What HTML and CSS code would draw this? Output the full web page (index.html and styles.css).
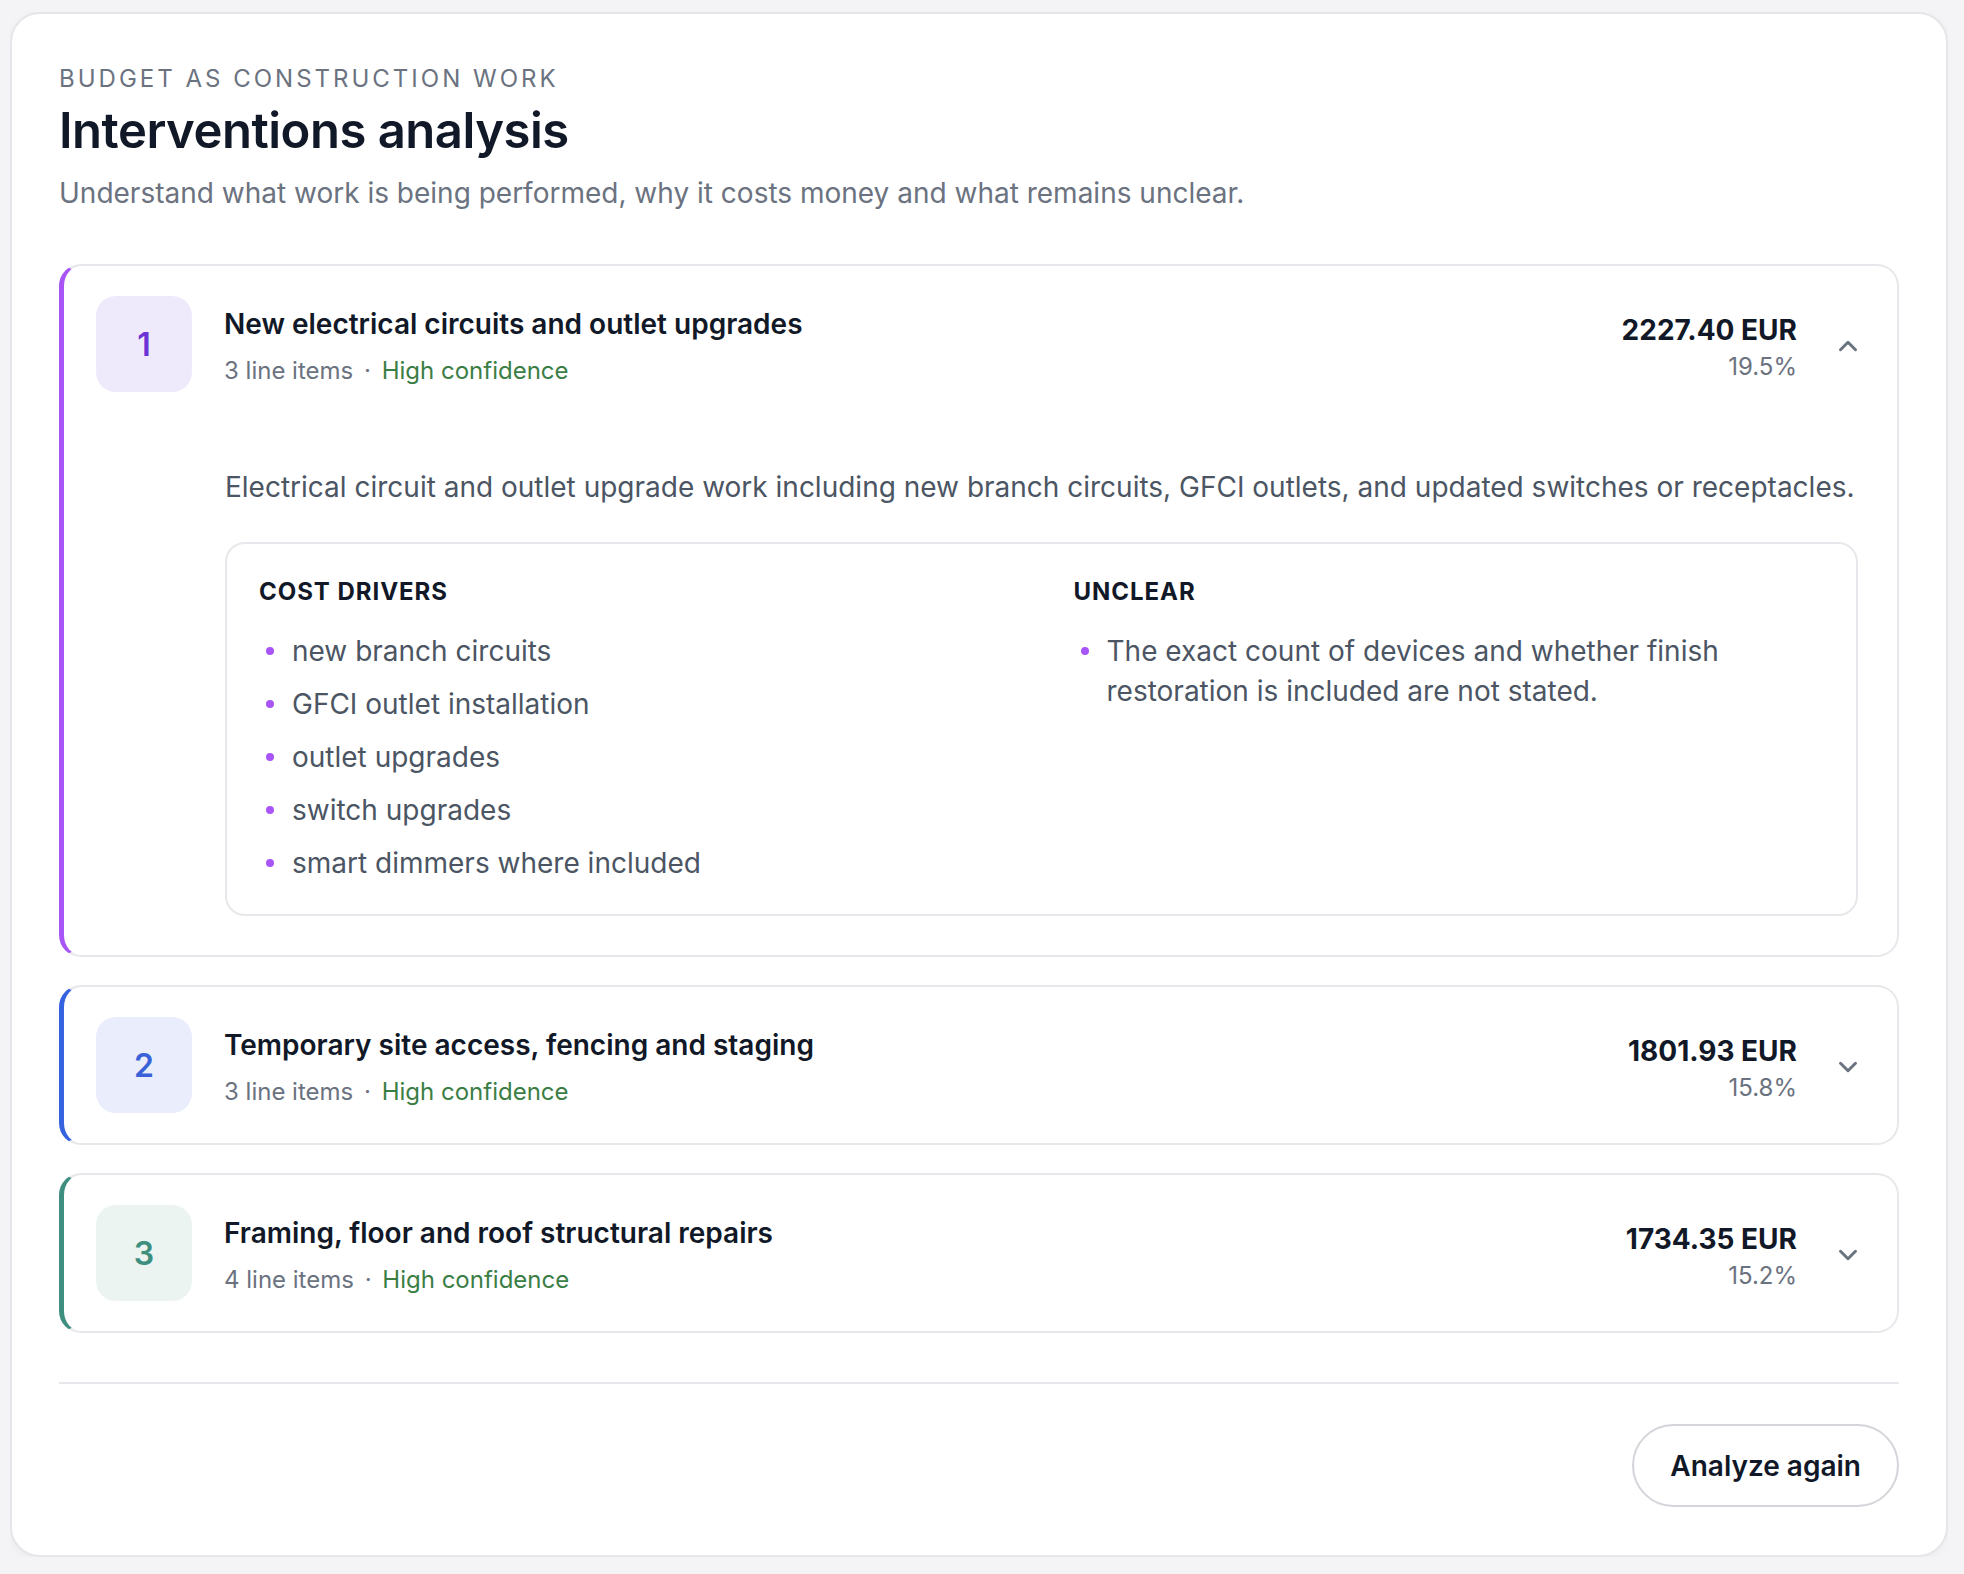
FILE: index.html
```html
<!DOCTYPE html>
<html lang="en">
  <head>
    <title>Interventions analysis</title>
    <link rel="stylesheet" href="styles.css">
  </head>

  <body>
    <section class="panel">
      <header class="panel-head">
        <p class="eyebrow">Budget as construction work</p>
        <h1>Interventions analysis</h1>
        <p class="lead">Understand what work is being performed, why it costs money and what remains unclear.</p>
      </header>

      <div class="items">
        <article class="item item-purple open">
          <div class="item-head">
            <div class="badge">1</div>
            <div class="item-info">
              <h3>New electrical circuits and outlet upgrades</h3>
              <p class="meta">3 line items <span class="dot">·</span> <span class="conf">High confidence</span></p>
            </div>
            <div class="amount">
              <strong>2227.40 EUR</strong>
              <span>19.5%</span>
            </div>
            <svg class="chev" viewBox="0 0 24 24" width="30" height="30"><path d="M6 15l6-6 6 6" /></svg>
          </div>

          <div class="item-body">
            <p class="desc">Electrical circuit and outlet upgrade work including new branch circuits, GFCI outlets, and updated switches or receptacles.</p>
            <div class="details">
              <div>
                <h4>Cost drivers</h4>
                <ul>
                  <li>new branch circuits</li>
                  <li>GFCI outlet installation</li>
                  <li>outlet upgrades</li>
                  <li>switch upgrades</li>
                  <li>smart dimmers where included</li>
                </ul>
              </div>
              <div>
                <h4>Unclear</h4>
                <ul>
                  <li>The exact count of devices and whether finish restoration is included are not stated.</li>
                </ul>
              </div>
            </div>
          </div>
        </article>

        <article class="item item-blue">
          <div class="item-head">
            <div class="badge">2</div>
            <div class="item-info">
              <h3>Temporary site access, fencing and staging</h3>
              <p class="meta">3 line items <span class="dot">·</span> <span class="conf">High confidence</span></p>
            </div>
            <div class="amount">
              <strong>1801.93 EUR</strong>
              <span>15.8%</span>
            </div>
            <svg class="chev" viewBox="0 0 24 24" width="30" height="30"><path d="M6 9l6 6 6-6" /></svg>
          </div>
        </article>

        <article class="item item-teal">
          <div class="item-head">
            <div class="badge">3</div>
            <div class="item-info">
              <h3>Framing, floor and roof structural repairs</h3>
              <p class="meta">4 line items <span class="dot">·</span> <span class="conf">High confidence</span></p>
            </div>
            <div class="amount">
              <strong>1734.35 EUR</strong>
              <span>15.2%</span>
            </div>
            <svg class="chev" viewBox="0 0 24 24" width="30" height="30"><path d="M6 9l6 6 6-6" /></svg>
          </div>
        </article>
      </div>

      <footer class="panel-foot">
        <button type="button">Analyze again</button>
      </footer>
    </section>
  </body>
</html>
```

FILE: styles.css
```css
body {
  margin: 12px 16px 17px 10px;
  background: #f4f4f6;
  color: #111827;
  font-family: Inter, "Noto Sans", sans-serif;
}
.panel {
  background: #fff;
  border: 2px solid #e6e6ea;
  border-radius: 30px;
  box-shadow: 0 2px 10px rgba(0, 0, 0, 0.04);
  padding: 48px 47px 48px 47px;
  box-sizing: border-box;
  height: 1545px;
  display: flex;
  flex-direction: column;
}
.eyebrow {
  margin: 0;
  font-size: 24px;
  line-height: 34px;
  letter-spacing: 3px;
  text-transform: uppercase;
  color: #6b7280;
}
h1 {
  margin: 6px 0 0;
  font-size: 49px;
  line-height: 58px;
  font-weight: 600;
  letter-spacing: -0.01em;
}
.lead {
  margin: 14px 0 0;
  font-size: 28px;
  line-height: 38px;
  color: #6b7280;
}
.items {
  margin-top: 52px;
  display: flex;
  flex-direction: column;
  gap: 28px;
}
.item {
  border: 2px solid #e8e8ec;
  border-left: 5px solid #a855f7;
  border-radius: 22px;
}
.item-blue {
  border-left-color: #3563e0;
}
.item-teal {
  border-left-color: #3f8f81;
}
.item-head {
  display: flex;
  align-items: center;
  gap: 32px;
  padding: 30px 34px 30px 32px;
}
.badge {
  width: 96px;
  height: 96px;
  flex: none;
  border-radius: 20px;
  background: #efeafb;
  color: #6d32d4;
  display: flex;
  align-items: center;
  justify-content: center;
  font-size: 32px;
  font-weight: 600;
}
.item-blue .badge {
  background: #eaeefc;
  color: #3a62d8;
}
.item-teal .badge {
  background: #ecf4f2;
  color: #3d8f7e;
}
.item-info {
  flex: 1;
  padding-top: 6px;
}
.item-info h3 {
  margin: 0;
  font-size: 28px;
  line-height: 34px;
  font-weight: 600;
}
.meta {
  margin: 14px 0 0;
  font-size: 24px;
  line-height: 32px;
  color: #6b7280;
}
.meta .dot {
  margin: 0 4px;
}
.conf {
  color: #3b7e45;
}
.amount {
  display: flex;
  flex-direction: column;
  align-items: flex-end;
  padding-top: 6px;
}
.amount strong {
  font-size: 28px;
  line-height: 34px;
  font-weight: 700;
}
.amount span {
  margin-top: 5px;
  font-size: 24px;
  line-height: 30px;
  color: #6b7280;
}
.chev {
  flex: none;
  margin: 4px 0 0 4px;
  fill: none;
  stroke: #6b7280;
  stroke-width: 2.4;
  stroke-linecap: round;
  stroke-linejoin: round;
}
.item-body {
  padding: 45px 39px 39px 161px;
}
.desc {
  margin: 0 -20px 0 0;
  font-size: 28px;
  line-height: 40px;
  color: #4b5563;
}
.details {
  margin-top: 35px;
  border: 2px solid #e8e8ec;
  border-radius: 20px;
  padding: 32px 32px 31px;
  display: grid;
  grid-template-columns: 1fr 1fr;
  column-gap: 64px;
}
.details h4 {
  margin: 0;
  font-size: 24px;
  line-height: 32px;
  font-weight: 700;
  letter-spacing: 0.04em;
  text-transform: uppercase;
}
.details ul {
  list-style: none;
  margin: 23px 0 0;
  padding: 0;
  display: flex;
  flex-direction: column;
  gap: 13px;
}
.details li {
  position: relative;
  padding-left: 33px;
  font-size: 28px;
  line-height: 40px;
  color: #4b5563;
}
.details li::before {
  content: "";
  position: absolute;
  left: 7px;
  top: 16px;
  width: 8px;
  height: 8px;
  border-radius: 50%;
  background: #a855f7;
}
.panel-foot {
  margin-top: auto;
  border-top: 2px solid #e8e8ec;
  padding-top: 40px;
  display: flex;
  justify-content: flex-end;
}
.panel-foot button {
  height: 83px;
  padding: 0 36px;
  border: 2px solid #d4d4da;
  border-radius: 999px;
  background: #fff;
  color: #111827;
  font-family: Inter, sans-serif;
  font-size: 28px;
  font-weight: 600;
  cursor: pointer;
}
```
